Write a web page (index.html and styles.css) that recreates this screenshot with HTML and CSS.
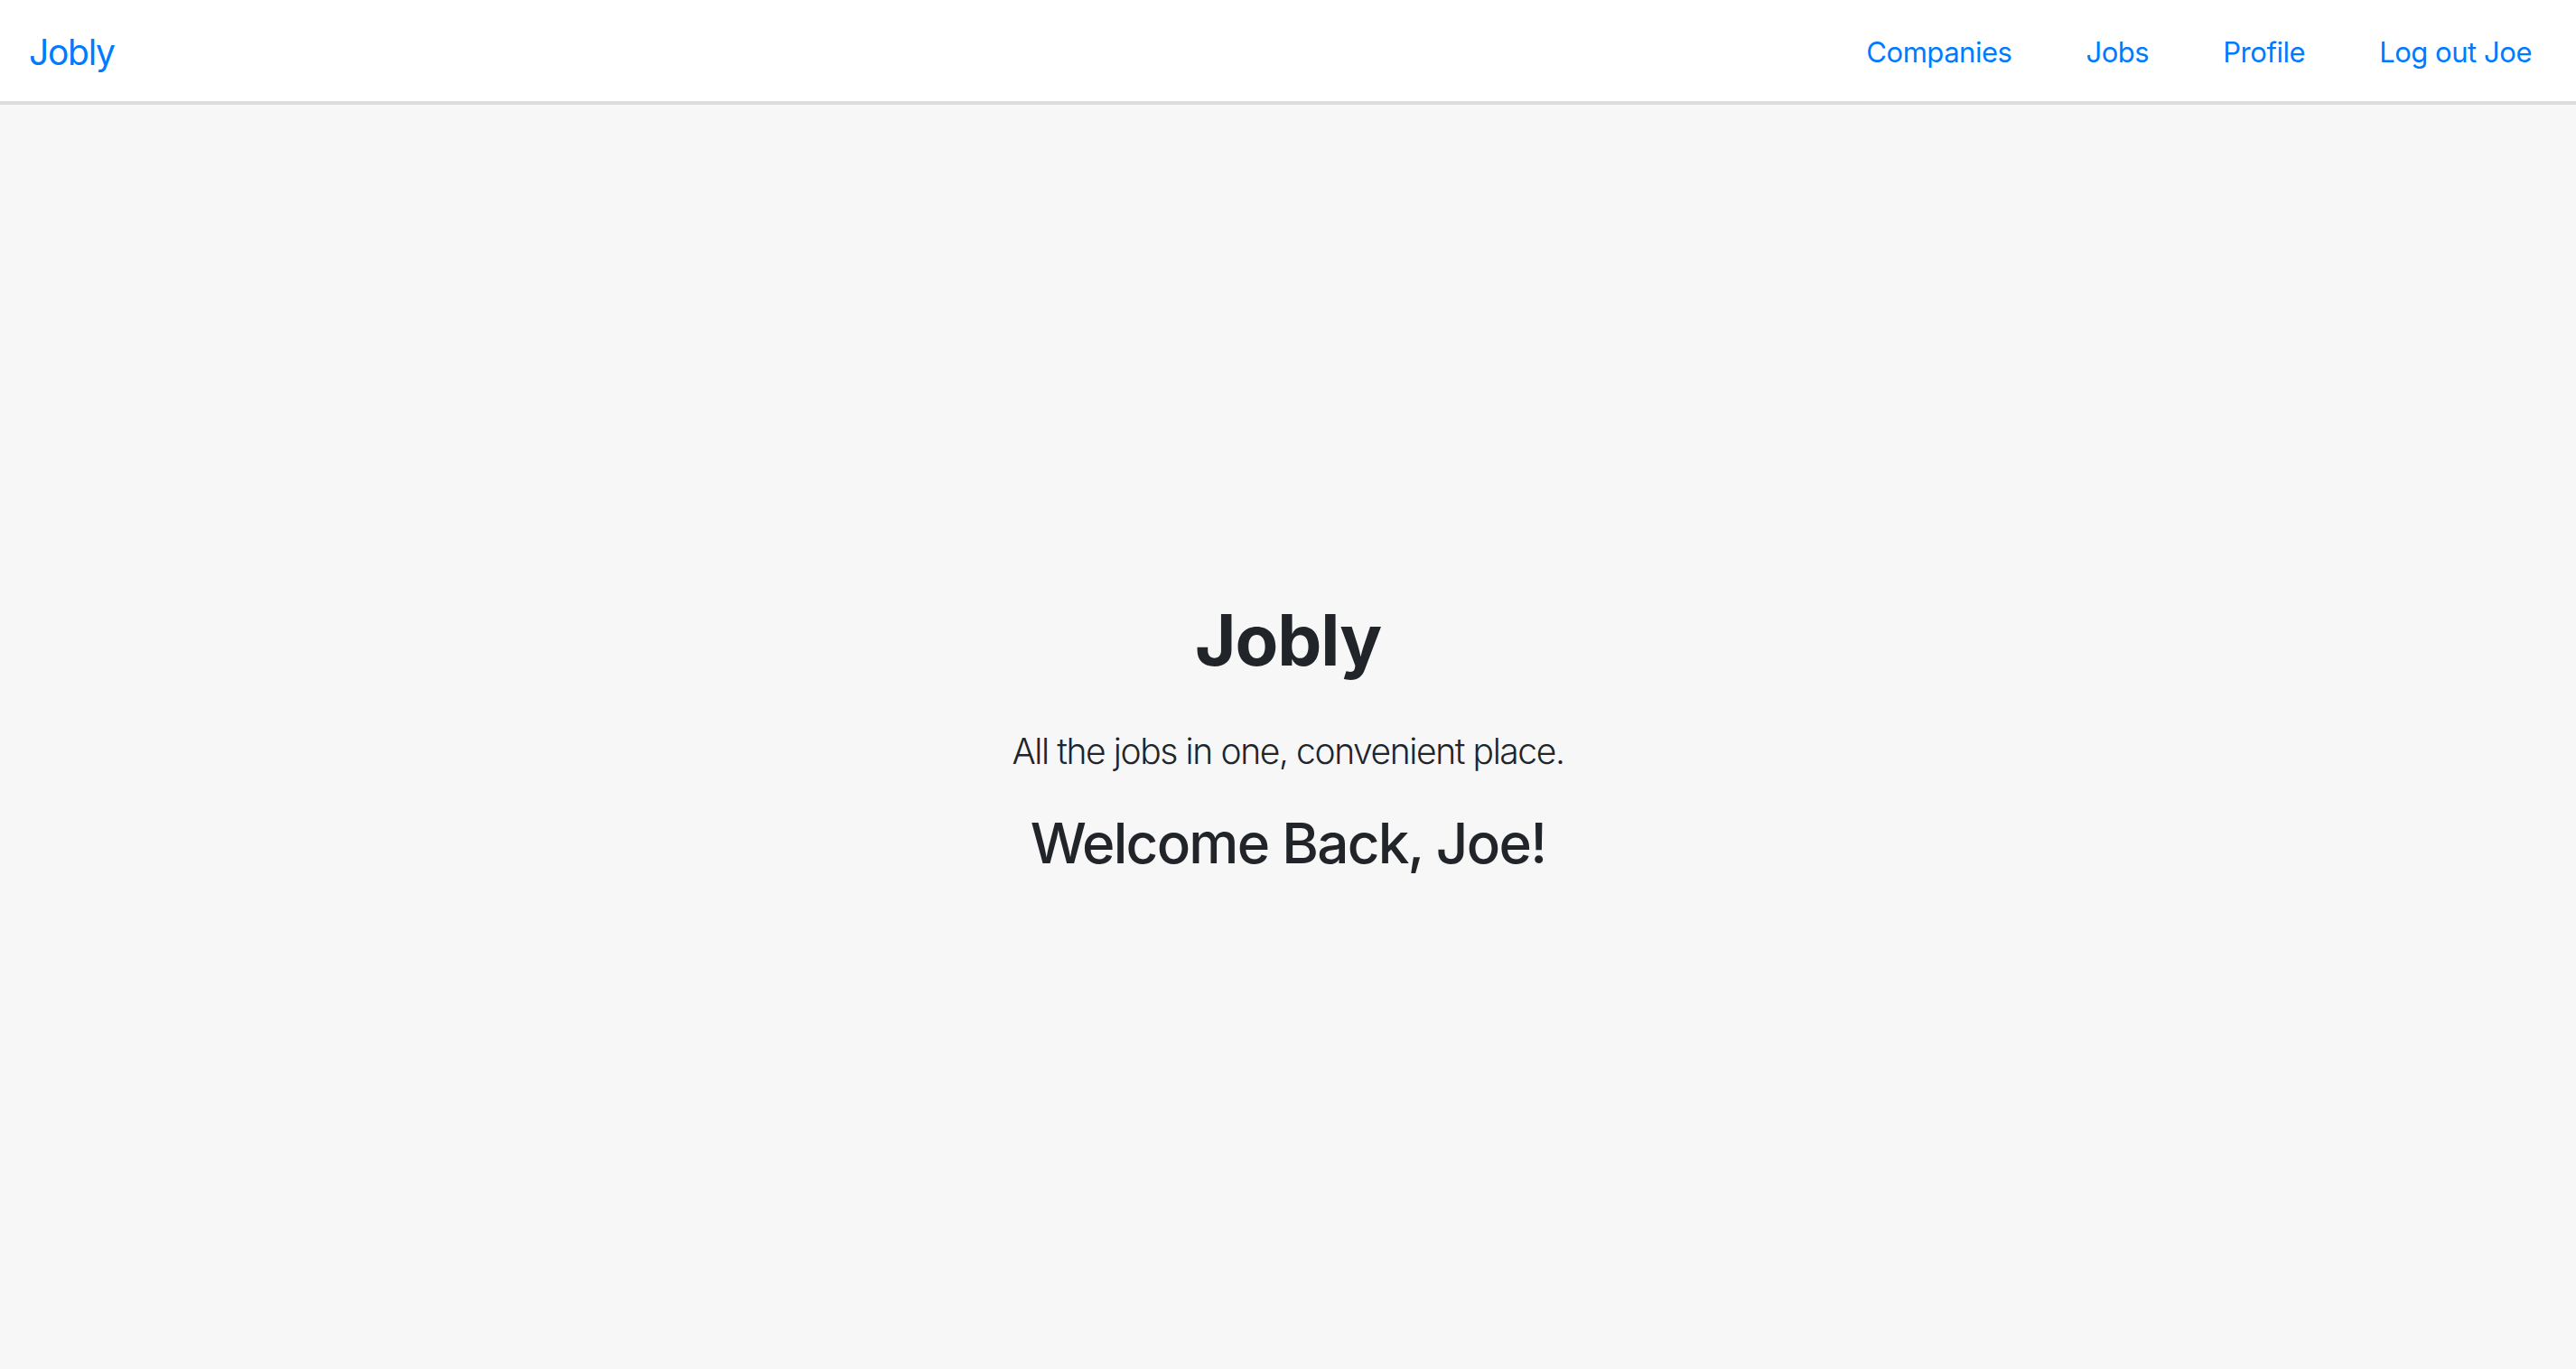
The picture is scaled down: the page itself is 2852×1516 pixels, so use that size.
FILE: index.html
```html
<!DOCTYPE html>
<html lang="en">
<head>
<meta charset="utf-8">
<title>Jobly</title>
<link rel="stylesheet" href="styles.css">
</head>
<body>
<nav class="navbar">
  <a class="brand" href="#">Jobly</a>
  <ul class="nav-links">
    <li><a href="#">Companies</a></li>
    <li><a href="#">Jobs</a></li>
    <li><a href="#">Profile</a></li>
    <li><a href="#">Log out Joe</a></li>
  </ul>
</nav>
<main class="home">
  <div class="hero">
    <h1 class="hero-title">Jobly</h1>
    <p class="lead">All the jobs in one, convenient place.</p>
    <h2 class="welcome">Welcome Back, Joe!</h2>
  </div>
</main>
</body>
</html>
```
FILE: styles.css
```css
* { box-sizing: border-box; }
html, body {
  margin: 0;
  padding: 0;
}
body {
  font-family: Inter, "Noto Sans", "Liberation Sans", sans-serif;
  color: #212529;
  background: #f7f7f7;
}
.navbar {
  height: 116px;
  background: #ffffff;
  border-bottom: 4px solid #dcdcdc;
  display: flex;
  align-items: center;
  justify-content: space-between;
  padding: 4px 49px 0 32px;
}
.brand {
  font-size: 39px;
  line-height: 60px;
  letter-spacing: -0.033em;
  color: #007bff;
  text-decoration: none;
}
.nav-links {
  list-style: none;
  margin: 0;
  padding: 0;
  display: flex;
  gap: 82px;
}
.nav-links a {
  font-size: 31px;
  line-height: 48px;
  letter-spacing: -0.015em;
  color: #007bff;
  text-decoration: none;
}
.home {
  height: 1400px;
  padding-top: 2px;
  display: flex;
  align-items: center;
  justify-content: center;
}
.hero {
  text-align: center;
}
.hero-title {
  font-size: 78px;
  line-height: 1.2;
  font-weight: 700;
  letter-spacing: -0.014em;
  margin: 0 0 47px;
}
.lead {
  font-size: 39px;
  line-height: 1.5;
  font-weight: 300;
  letter-spacing: -0.036em;
  margin: 0 0 36px;
}
.welcome {
  font-size: 62px;
  line-height: 1.2;
  font-weight: 500;
  letter-spacing: -0.028em;
  margin: 0;
}
```
